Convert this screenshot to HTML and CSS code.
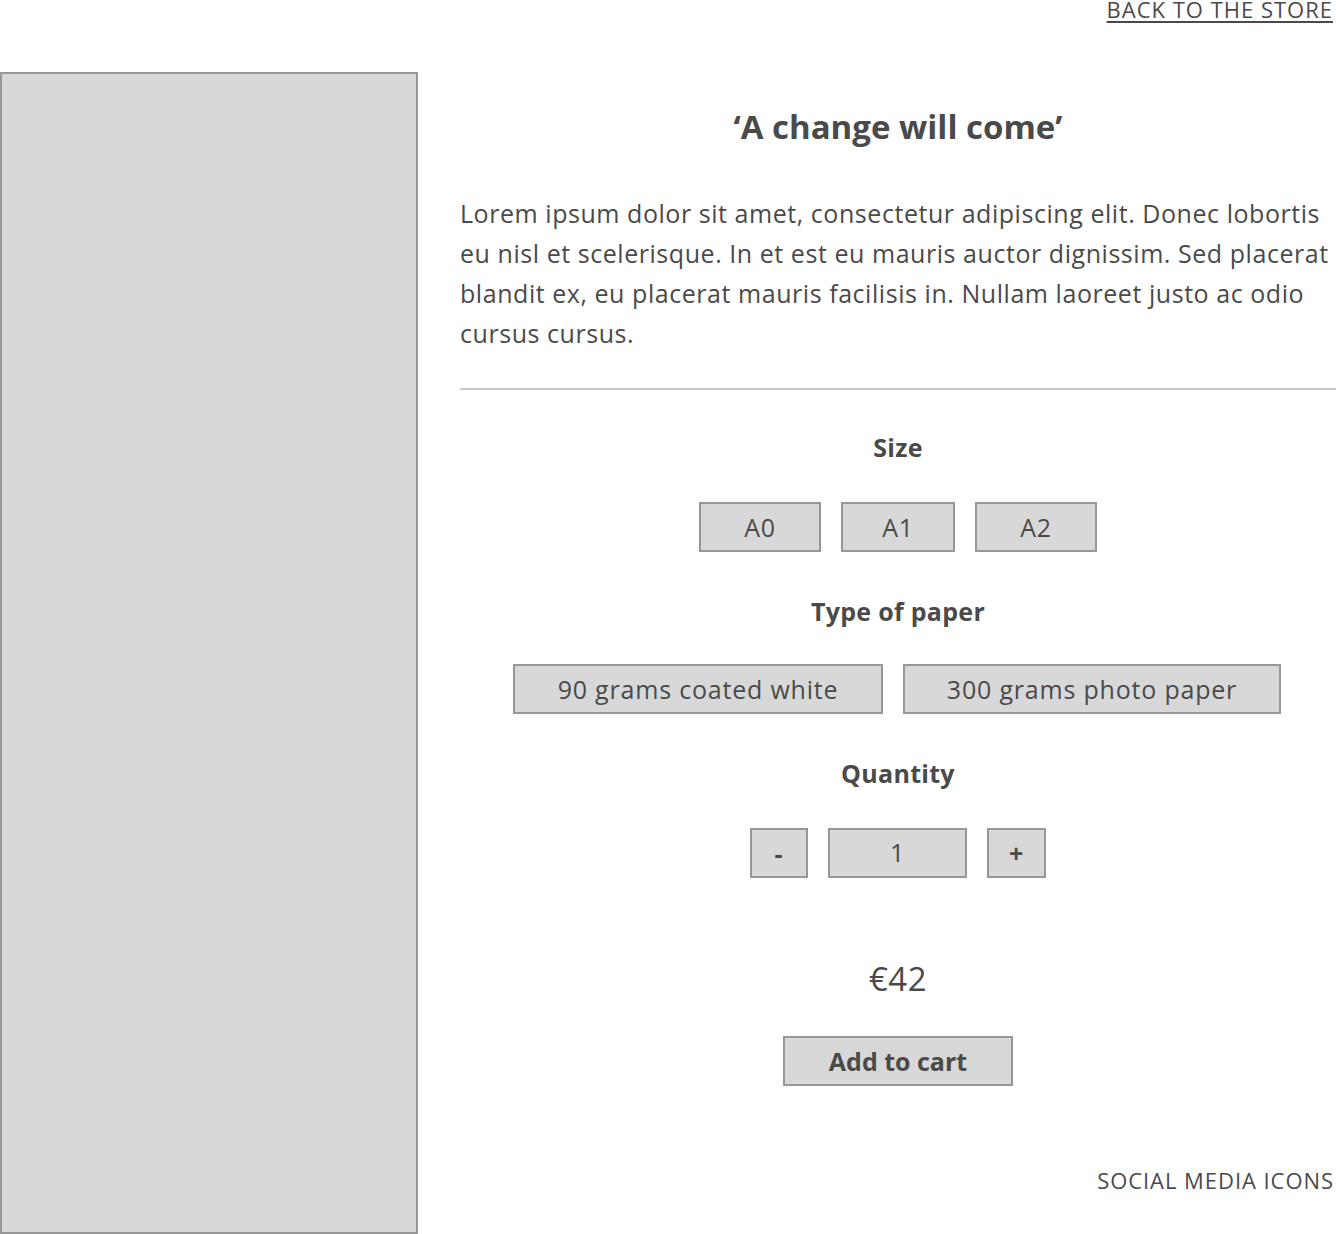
FILE: index.html
```html
<!DOCTYPE html>
<html lang="en">
<head>
<meta charset="utf-8">
<title>A change will come</title>
<link rel="stylesheet" href="styles.css">
</head>
<body>
<header class="topbar">
  <a class="back-link" href="#">BACK TO THE STORE</a>
</header>
<main class="product">
  <div class="product-image"></div>
  <section class="details">
    <h1 class="title">‘A change will come’</h1>
    <p class="description">Lorem ipsum dolor sit amet, consectetur adipiscing elit. Donec lobortis eu nisl et scelerisque. In et est eu mauris auctor dignissim. Sed placerat blandit ex, eu placerat mauris facilisis in. Nullam laoreet justo ac odio cursus cursus.</p>
    <hr class="divider">
    <h2 class="label label-size">Size</h2>
    <div class="options options-size">
      <button class="opt opt-a0">A0</button>
      <button class="opt opt-a1">A1</button>
      <button class="opt opt-a2">A2</button>
    </div>
    <h2 class="label label-paper">Type of paper</h2>
    <div class="options options-paper">
      <button class="opt opt-90">90 grams coated white</button>
      <button class="opt opt-300">300 grams photo paper</button>
    </div>
    <h2 class="label label-qty">Quantity</h2>
    <div class="options options-qty">
      <button class="opt opt-minus">-</button>
      <div class="opt opt-count">1</div>
      <button class="opt opt-plus">+</button>
    </div>
    <div class="price">€42</div>
    <button class="opt add-cart">Add to cart</button>
    <div class="social">SOCIAL MEDIA ICONS</div>
  </section>
</main>
</body>
</html>
```
FILE: styles.css
```css
* { box-sizing: border-box; }
html, body {
  margin: 0;
  padding: 0;
  background: #fff;
}
body {
  font-family: "Open Sans", "Liberation Sans", sans-serif;
  color: #4a4a4a;
  width: 1336px;
  height: 1234px;
  overflow: hidden;
}
.topbar {
  height: 72px;
  display: flex;
  justify-content: flex-end;
  align-items: flex-start;
  padding-right: 4px;
}
.back-link {
  font-size: 22px;
  line-height: 18px;
  letter-spacing: 1px;
  margin-right: -1px;
  color: #4a4a4a;
  text-decoration: underline;
  text-underline-offset: 3px;
  text-decoration-thickness: 2px;
}
.product {
  display: flex;
  gap: 42px;
  height: 1162px;
}
.product-image {
  width: 418px;
  flex: 0 0 418px;
  height: 1162px;
  background: #d8d8d8;
  border: 2px solid #979797;
}
.details {
  flex: 1;
  display: flex;
  flex-direction: column;
  align-items: center;
}
.title {
  margin: 35px 0 0;
  font-size: 33px;
  line-height: 40px;
  font-weight: 700;
  text-align: center;
}
.description {
  margin: 46px 0 0;
  font-size: 25px;
  line-height: 40px;
  letter-spacing: 0.55px;
  align-self: stretch;
}
.divider {
  align-self: stretch;
  margin: 35px 0 0;
  border: 0;
  height: 2px;
  background: #c8c8c8;
}
.label {
  margin: 0;
  font-size: 25px;
  line-height: 30px;
  letter-spacing: 0.3px;
  font-weight: 700;
}
.label-size { margin-top: 42px; }
.label-paper { margin-top: 44px; }
.label-qty { margin-top: 44px; }
.options {
  display: flex;
  gap: 20px;
  margin-top: 40px;
}
.options-paper { margin-top: 38px; }
.opt {
  font-family: inherit;
  color: #4a4a4a;
  height: 50px;
  background: #d8d8d8;
  border: 2px solid #979797;
  border-radius: 0;
  font-size: 25px;
  line-height: 44px;
  letter-spacing: 0.8px;
  padding: 0;
  text-align: center;
  display: block;
}
.opt-a0 { width: 122px; }
.opt-a1 { width: 114px; }
.opt-a2 { width: 122px; }
.opt-90 { width: 370px; }
.opt-300 { width: 378px; }
.opt-minus { width: 58px; font-weight: 700; }
.opt-count { width: 139px; }
.opt-plus { width: 59px; font-weight: 700; }
.options-paper { transform: translateX(-1px); }
.price {
  margin-top: 81px;
  font-size: 33px;
  line-height: 40px;
  letter-spacing: 0.5px;
}
.add-cart {
  margin-top: 37px;
  width: 230px;
  font-size: 25px;
  letter-spacing: 0;
  font-weight: 700;
}
.social {
  align-self: flex-end;
  margin-top: 79px;
  margin-right: 2px;
  font-size: 22px;
  line-height: 30px;
  letter-spacing: 0.95px;
}
```
